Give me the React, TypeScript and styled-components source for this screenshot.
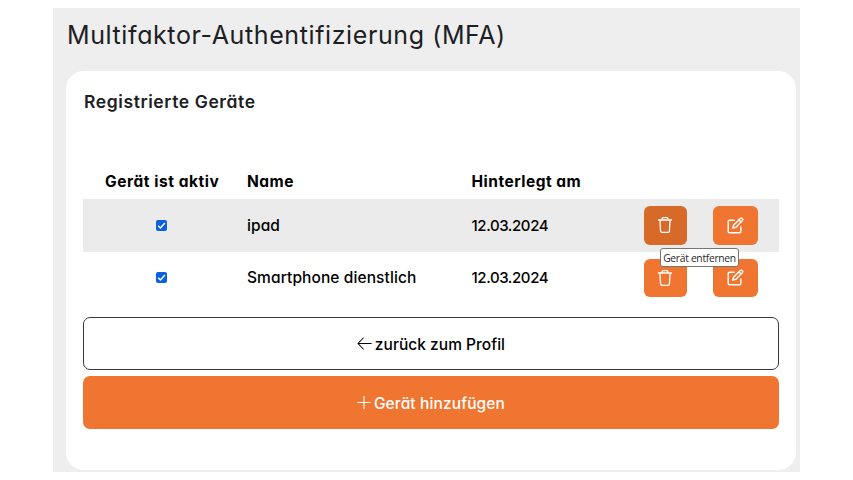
import React from 'react';
import styled, { createGlobalStyle } from 'styled-components';

const GlobalStyle = createGlobalStyle`
  *, *::before, *::after { box-sizing: border-box; }
  body {
    margin: 0;
    background: #fff;
    color: #000;
    font-family: Inter, "Open Sans", sans-serif;
    font-feature-settings: "cv11", "ss03";
    overflow: hidden;
  }
`;

const Page = styled.main`
  width: 747px;
  height: 464px;
  margin: 8px 0 0 53px;
  padding: 0 4px 2px 13px;
  background: #eeeeee;
  display: flex;
  flex-direction: column;
`;

const Title = styled.h1`
  margin: 0;
  height: 62.5px;
  padding: 11px 0 0 1px;
  font-size: 25px;
  line-height: 32px;
  font-weight: 430;
  letter-spacing: 0.6px;
  color: #1c2024;
  white-space: nowrap;
`;

const Card = styled.section`
  flex: 1;
  padding: 20px 17.5px 0 17.4px;
  border-radius: 18px;
  background: #fff;
`;

const CardTitle = styled.h2`
  margin: 0 0 69.5px;
  padding-left: 0.6px;
  font-size: 17.5px;
  line-height: 22px;
  font-weight: 600;
  letter-spacing: 0.6px;
  color: #1c2024;
`;

const Row = styled.div<{ $striped?: boolean }>`
  display: grid;
  grid-template-columns: 156.6px 224.5px 172.5px 69.2px 1fr;
  align-items: center;
  height: 52.5px;
  font-size: 15.5px;
  font-weight: 500;
  white-space: nowrap;
  background: ${(p) => (p.$striped ? '#ebebeb' : 'transparent')};
`;

const HeaderRow = styled(Row)`
  height: 36px;
  margin-top: -19px;
  font-weight: 650;
`;

const Label = styled.span<{ $space?: number; $indent?: number }>`
  letter-spacing: ${(p) => p.$space ?? 0}px;
  padding-left: ${(p) => p.$indent ?? 7}px;
`;

const DateLabel = styled(Label)`
  font-size: 15px;
`;

const Checkbox = styled.span`
  justify-self: center;
  width: 11px;
  height: 11px;
  border-radius: 2px;
  background: #0b60e0;
  display: flex;
`;

const IconButton = styled.button<{ $hover?: boolean; $wide?: boolean }>`
  display: flex;
  align-items: center;
  justify-content: center;
  width: ${(p) => (p.$wide ? 45 : 43)}px;
  height: 38.5px;
  margin-left: 7px;
  padding: 0;
  border: 0;
  border-radius: 6px;
  color: #fff;
  background: ${(p) => (p.$hover ? '#d76a28' : '#f07530')};
`;

const Anchor = styled.div`
  position: relative;
`;

const Tooltip = styled.span`
  position: absolute;
  z-index: 2;
  left: 23px;
  top: 42px;
  width: 79px;
  height: 19px;
  border: 1px solid #767676;
  border-radius: 3px;
  background: #fff;
  color: #2b2b2b;
  font: 400 10.3px/18px "Open Sans", "Noto Sans", sans-serif;
  letter-spacing: -0.3px;
  text-align: center;
`;

const Action = styled.button<{ $primary?: boolean }>`
  display: flex;
  align-items: center;
  justify-content: center;
  gap: 3px;
  width: 100%;
  height: 53px;
  margin: ${(p) => (p.$primary ? '6.5px' : '12.5px')} 0 0;
  padding: ${(p) => (p.$primary ? '1px' : '2px')} 0 0;
  border: ${(p) => (p.$primary ? '0' : '1px solid #343a44')};
  border-radius: 7px;
  background: ${(p) => (p.$primary ? '#f07530' : '#fff')};
  color: ${(p) => (p.$primary ? '#fff' : '#000')};
  font: inherit;
  font-feature-settings: inherit;
  font-size: 15.5px;
  font-weight: 500;
`;

const ActionText = styled.span<{ $space: number }>`
  letter-spacing: ${(p) => p.$space}px;
`;

const Check = () => (
  <svg width="11" height="11" viewBox="0 0 11 11" fill="none" stroke="#fff" strokeWidth="1.5">
    <path d="M2.2 5.8 4.4 8 8.9 2.9" />
  </svg>
);

const Trash = () => (
  <svg width="16" height="18" viewBox="0 0 16 18" fill="none" stroke="#fff" strokeWidth="1.3" strokeLinecap="round" strokeLinejoin="round">
    <path d="M1.5 4H14.5M5 4V3Q5 1.6 6.2 1.6H9.8Q11 1.6 11 3V4M2.9 4 3.6 15Q3.7 16.4 5.1 16.4H10.9Q12.3 16.4 12.4 15L13.1 4" />
  </svg>
);

const Edit = () => (
  <svg width="17" height="17" viewBox="0 0 17 17" fill="none" stroke="#fff" strokeWidth="1.4" strokeLinecap="round" strokeLinejoin="round">
    <path d="M7.2 3.2H2.6Q1.2 3.2 1.2 4.6V14.4Q1.2 15.8 2.6 15.8H12.4Q13.8 15.8 13.8 14.4V10" />
    <path d="M5.8 11.2 6.6 8.2 13.2 1.6Q14.2.7 15.2 1.6T15.3 3.7L8.7 10.4ZM11.9 2.9 14 5" />
  </svg>
);

const ArrowLeft = () => (
  <svg width="15" height="14" viewBox="0 0 15 14" fill="none" stroke="currentColor" strokeWidth="1.05" strokeLinecap="round" strokeLinejoin="round">
    <path d="M14.2 6.5H1M6.3 1 1 6.5 6.3 12" />
  </svg>
);

const Plus = () => (
  <svg width="14" height="14" viewBox="0 0 14 14" fill="none" stroke="currentColor" strokeWidth="1.1" strokeLinecap="round">
    <path d="M7 .3V12.7M.8 6.5H13.2" />
  </svg>
);

const devices = [
  { name: 'ipad', date: '12.03.2024', hover: true },
  { name: 'Smartphone dienstlich', date: '12.03.2024', hover: false },
];

export default function App() {
  return (
    <>
      <GlobalStyle />
      <Page>
        <Title>Multifaktor-Authentifizierung (MFA)</Title>
        <Card>
          <CardTitle>Registrierte Geräte</CardTitle>
          <HeaderRow>
            <Label $indent={21.6} $space={0.55}>Gerät ist aktiv</Label>
            <Label $space={0.5}>Name</Label>
            <Label $space={0.5}>Hinterlegt am</Label>
          </HeaderRow>
          {devices.map((d) => (
            <Row key={d.name} $striped={d.hover}>
              <Checkbox role="checkbox" aria-checked="true"><Check /></Checkbox>
              <Label $space={0.1}>{d.name}</Label>
              <DateLabel $space={-0.4}>{d.date}</DateLabel>
              <Anchor>
                <IconButton $hover={d.hover} aria-label="Gerät entfernen"><Trash /></IconButton>
                {d.hover && <Tooltip role="tooltip">Gerät entfernen</Tooltip>}
              </Anchor>
              <IconButton $wide aria-label="Gerät bearbeiten"><Edit /></IconButton>
            </Row>
          ))}
          <Action><ArrowLeft /><ActionText $space={0.03}>zurück zum Profil</ActionText></Action>
          <Action $primary><Plus /><ActionText $space={0.12}>Gerät hinzufügen</ActionText></Action>
        </Card>
      </Page>
    </>
  );
}
